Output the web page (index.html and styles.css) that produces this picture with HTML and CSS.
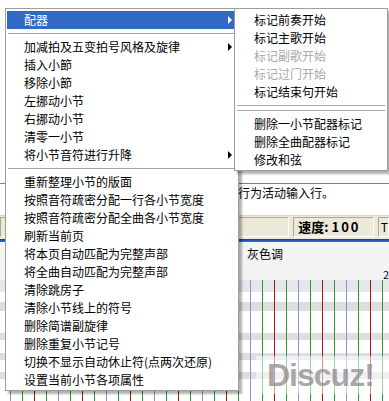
FILE: index.html
```html
<!DOCTYPE html>
<html lang="zh-CN">
<head>
  <meta charset="UTF-8">
  <title>配器菜单</title>
  <link rel="stylesheet" href="styles.css">
</head>
<body>
  <div class="app">
    <div class="edit-area">
      <div class="input-line">设置当前行为活动输入行。</div>
    </div>
    <div class="status">
      <div class="panel panel-wide"></div>
      <div class="panel panel-speed">速度: <span class="num">100</span></div>
      <div class="panel panel-end">T</div>
    </div>
    <div class="blue-rule"></div>
    <div class="tool-row">
      <span class="tone">灰色调</span>
      <span class="bar-no">2</span>
    </div>
    <div class="staff"></div>
  </div>

  <!-- 主菜单 -->
  <div class="menu main-menu">
    <div class="item active has-sub">配器</div>
    <div class="sep"></div>
    <div class="item has-sub">加减拍及五变拍号风格及旋律</div>
    <div class="item">插入小節</div>
    <div class="item">移除小節</div>
    <div class="item">左挪动小节</div>
    <div class="item">右挪动小节</div>
    <div class="item">清零一小节</div>
    <div class="item has-sub">将小节音符进行升降</div>
    <div class="sep"></div>
    <div class="item">重新整理小节的版面</div>
    <div class="item">按照音符疏密分配一行各小节宽度</div>
    <div class="item">按照音符疏密分配全曲各小节宽度</div>
    <div class="item">刷新当前页</div>
    <div class="item">将本页自动匹配为完整声部</div>
    <div class="item">将全曲自动匹配为完整声部</div>
    <div class="item">清除跳房子</div>
    <div class="item">清除小节线上的符号</div>
    <div class="item">删除简谱副旋律</div>
    <div class="item">删除重复小节记号</div>
    <div class="item">切换不显示自动休止符(点两次还原)</div>
    <div class="item">设置当前小节各项属性</div>
  </div>

  <!-- 配器子菜单 -->
  <div class="menu sub-menu">
    <div class="item">标记前奏开始</div>
    <div class="item">标记主歌开始</div>
    <div class="item disabled">标记副歌开始</div>
    <div class="item disabled">标记过门开始</div>
    <div class="item">标记结束句开始</div>
    <div class="sep"></div>
    <div class="sep"></div>
    <div class="item">删除一小节配器标记</div>
    <div class="item">删除全曲配器标记</div>
    <div class="item">修改和弦</div>
  </div>

  <div class="watermark">Discuz!</div>
</body>
</html>
```

FILE: styles.css
```css
body {
  margin: 0;
  width: 389px;
  height: 401px;
  overflow: hidden;
  position: relative;
  background: #fff;
  font-family: "Noto Sans CJK SC", "Liberation Sans", sans-serif;
  font-size: 12px;
  color: #000;
}

/* 背后的程序窗口 */
.app {
  display: flex;
  flex-direction: column;
  height: 401px;
}
.edit-area {
  height: 215px;
  padding-top: 183px;
  box-sizing: border-box;
}
.input-line {
  border-top: 1px solid #7f7f7f;
  padding-left: 190px;
  line-height: 17px;
  white-space: nowrap;
}
.status {
  height: 22px;
  display: flex;
  gap: 4px;
  padding: 1px 0 0 0;
  background: #ece9d8;
  border-top: 1px solid #d6d3c6;
}
.panel {
  border-top: 1px solid #aca899;
  border-left: 1px solid #aca899;
  border-bottom: 1px solid #fff;
  border-right: 1px solid #fff;
  height: 18px;
  line-height: 18px;
  white-space: nowrap;
}
.panel-wide {
  width: 293px;
}
.panel-speed {
  width: 76px;
  padding-left: 4px;
  font-size: 13px;
  font-weight: bold;
}
.panel-speed .num {
  letter-spacing: 2px;
}
.panel-end {
  flex: 1;
  padding-left: 2px;
}
.blue-rule {
  height: 3px;
  background: linear-gradient(#0b3aa6, #3d72d6);
}
.tool-row {
  height: 38px;
  display: flex;
  flex-direction: column;
  justify-content: space-between;
  padding: 5px 0 0 247px;
  box-sizing: border-box;
  background: #f3f3f3;
}
.tone {
  line-height: 14px;
}
.bar-no {
  align-self: flex-end;
  font-size: 11px;
  line-height: 12px;
}
/* 五线谱区域：竖线每12px一条 */
.staff {
  flex: 1;
  background-color: #fff;
  background-image:
    linear-gradient(to right,
      #8f8fd8 0 1px, transparent 1px 12px,
      #2c9c2c 12px 13px, transparent 13px 24px,
      #a01818 24px 25px, transparent 25px 36px,
      #2c9c2c 36px 37px, transparent 37px 48px),
    linear-gradient(to bottom,
      #e6e6ee 0 12px, transparent 12px 22px,
      #dedee2 22px 31px, transparent 31px 53px,
      #dedee2 53px 60px, transparent 60px 73px,
      #dedee2 73px 80px, transparent 80px 92px,
      #dedee2 92px 99px, transparent 99px);
  background-size: 48px 100%, 100% 100%;
  background-repeat: repeat-x, no-repeat;
  background-position: 10px 0, 0 0;
}

/* 右键菜单 */
.menu {
  position: absolute;
  background: #fff;
  border: 1px solid #9d9d9d;
  padding: 2px 1px 1px;
  box-shadow: 3px 3px 2px rgba(0, 0, 0, 0.3);
}
.main-menu {
  left: 5px;
  top: 8px;
  width: 230px;
}
.sub-menu {
  left: 234px;
  top: 8px;
  width: 150px;
}
.item {
  height: 18px;
  line-height: 18px;
  padding-left: 17px;
  white-space: nowrap;
  position: relative;
}
.sub-menu .item {
  padding-left: 18px;
}
.item.active {
  background: #316ac5;
  color: #fff;
}
.item.disabled {
  color: #aca8a8;
}
.item.has-sub::after {
  content: "";
  position: absolute;
  right: 5px;
  top: 5px;
  border-left: 4px solid #000;
  border-top: 4px solid transparent;
  border-bottom: 4px solid transparent;
}
.item.active.has-sub::after {
  border-left-color: #fff;
}
.sep {
  height: 1px;
  margin: 4px 1px;
  background: #a7a7a7;
}

.watermark {
  position: absolute;
  left: 256px;
  top: 356px;
  width: 140px;
  height: 38px;
  padding-left: 11px;
  box-sizing: border-box;
  background: rgba(255, 255, 255, 0.55);
  font-family: "Liberation Sans", sans-serif;
  font-weight: bold;
  font-size: 32px;
  letter-spacing: -1px;
  line-height: 38px;
  color: rgba(140, 140, 140, 0.75);
}
```
